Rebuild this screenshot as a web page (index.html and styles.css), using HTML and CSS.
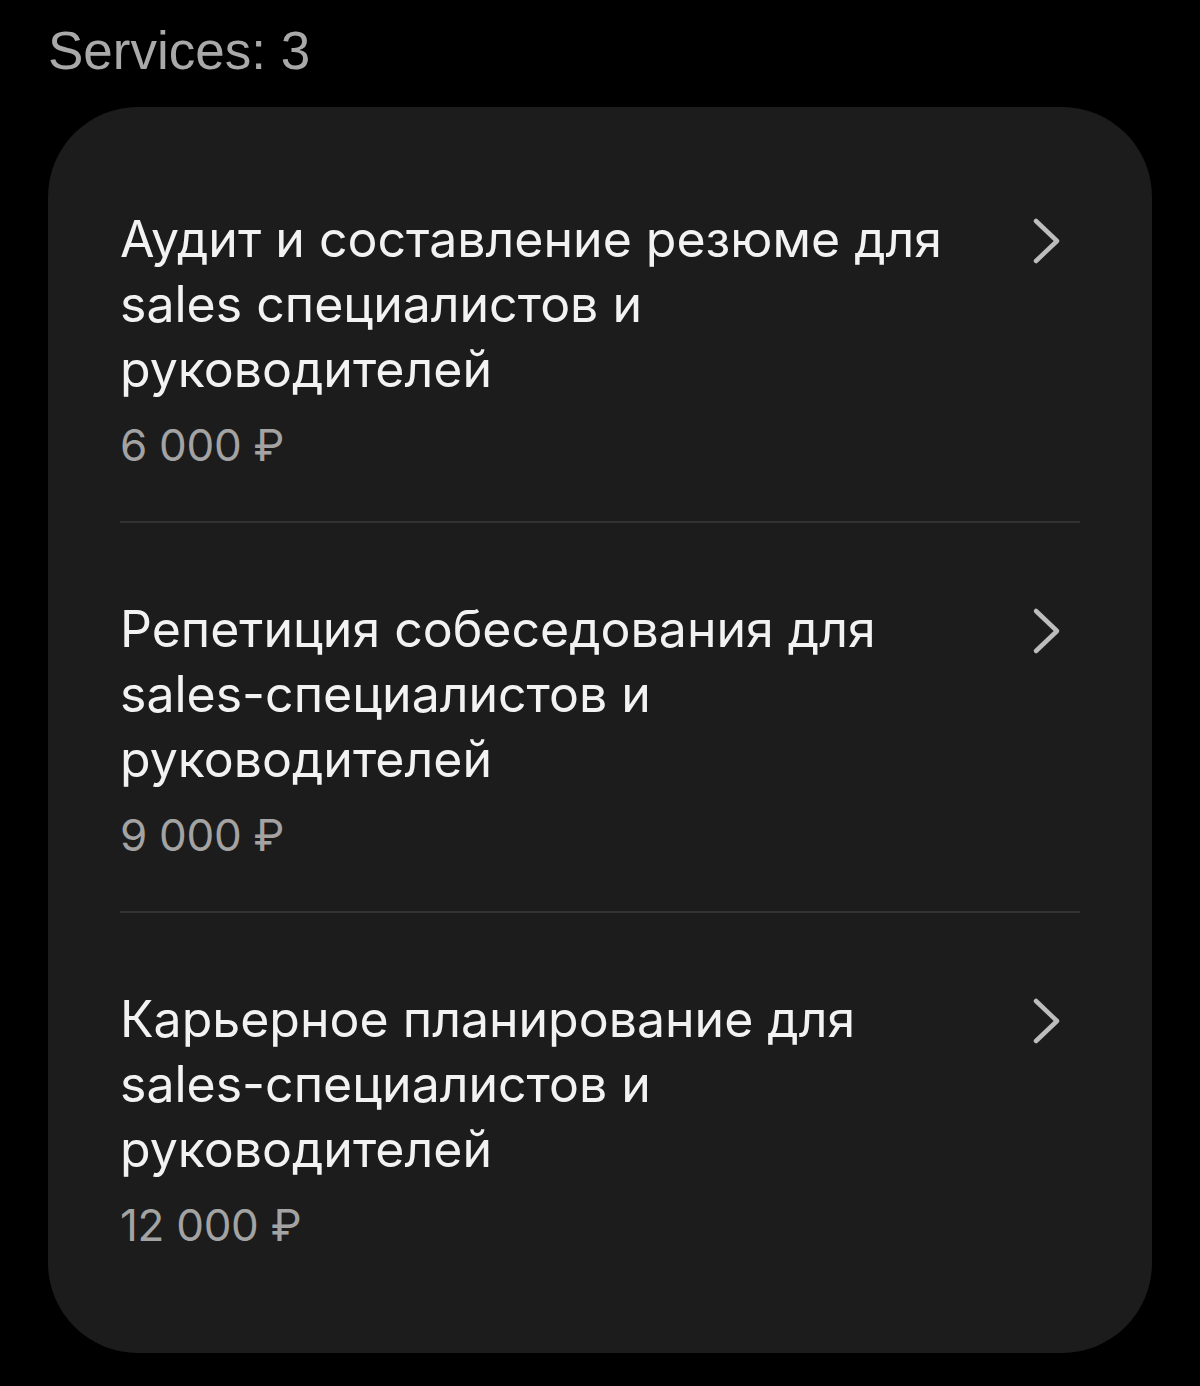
FILE: index.html
```html
<!DOCTYPE html>
<html lang="ru">
<head>
<meta charset="utf-8">
<link rel="stylesheet" href="styles.css">
</head>
<body>
<div class="page">
  <div class="header">Services: 3</div>
  <div class="card">
    <div class="item">
      <div class="text">
        <div class="title">Аудит и составление резюме для sales специалистов и руководителей</div>
        <div class="price">6 000 ₽</div>
      </div>
      <svg class="chev" viewBox="0 0 30 48" width="30" height="48"><path d="M4 4 L25 24 L4 44" fill="none" stroke="#bdbdbd" stroke-width="4.5" stroke-linecap="round" stroke-linejoin="round"/></svg>
    </div>
    <div class="item">
      <div class="text">
        <div class="title">Репетиция собеседования для sales-специалистов и руководителей</div>
        <div class="price">9 000 ₽</div>
      </div>
      <svg class="chev" viewBox="0 0 30 48" width="30" height="48"><path d="M4 4 L25 24 L4 44" fill="none" stroke="#bdbdbd" stroke-width="4.5" stroke-linecap="round" stroke-linejoin="round"/></svg>
    </div>
    <div class="item">
      <div class="text">
        <div class="title">Карьерное планирование для sales-специалистов и руководителей</div>
        <div class="price">12 000 ₽</div>
      </div>
      <svg class="chev" viewBox="0 0 30 48" width="30" height="48"><path d="M4 4 L25 24 L4 44" fill="none" stroke="#bdbdbd" stroke-width="4.5" stroke-linecap="round" stroke-linejoin="round"/></svg>
    </div>
  </div>
</div>
</body>
</html>
```

FILE: styles.css
```css
html, body {
  margin: 0;
  padding: 0;
  background: #000;
}
.page {
  width: 1200px;
  height: 1386px;
  box-sizing: border-box;
  padding: 22px 48px 0 48px;
  font-family: "Inter", "Noto Sans", sans-serif;
}
.header {
  font-family: "Liberation Sans", Arial, sans-serif;
  font-size: 53px;
  line-height: 58px;
  color: #a9a9a9;
  height: 85px;
}
.card {
  background: #1c1c1c;
  border-radius: 90px;
  padding: 26px 72px 52px 72px;
}
.item {
  display: flex;
  align-items: flex-start;
  padding: 74px 0 48px 0;
  border-bottom: 2px solid #323232;
}
.item:last-child {
  border-bottom: none;
}
.text {
  flex: 1;
  padding-right: 72px;
}
.title {
  font-size: 50px;
  line-height: 65px;
  color: #f2f2f2;
  font-weight: 400;
}
.price {
  font-size: 44px;
  line-height: 56px;
  color: #a3a3a3;
  margin-top: 15px;
  letter-spacing: -0.3px;
}
.chev {
  flex: none;
  margin-top: 10px;
  margin-right: 18px;
}
```
